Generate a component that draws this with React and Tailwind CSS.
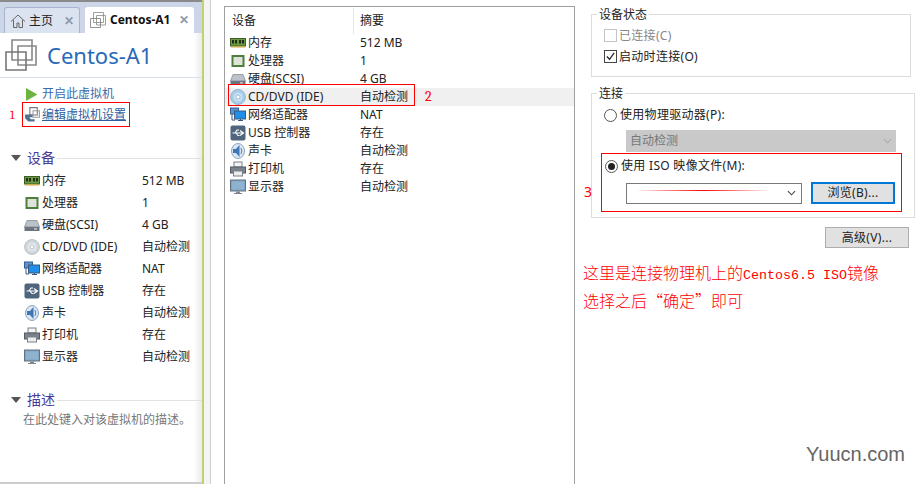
import React from 'react';

const Icon = ({ name, className = 'w-4 h-4' }) => {
    const icons = {
        memory: (
            <>
                <rect x="0.5" y="3.500" width="15" height="7.500" fill="#6f9a45" stroke="#3c5f24" />
                <path d="M2 5h2v3.500H2zM5 5h2v3.500H5zM9 5h2v3.500H9zM12 5h2v3.500h-2z" fill="#1f2f14" />
                <path d="M1 11h14v1.500H1z" fill="#c9a94a" />
            </>
        ),
        cpu: (
            <>
                <rect x="1.500" y="2" width="13" height="12" fill="#4f7f3d" />
                <rect x="3.500" y="4" width="9" height="8" fill="#dfe4da" />
            </>
        ),
        disk: (
            <>
                <path d="M3 3.500h10l2.500 6.500H.5z" fill="#bcc2c9" stroke="#7b828c" strokeWidth="0.7" />
                <rect x="0.5" y="10" width="15" height="4" fill="#6d747f" />
                <rect x="10" y="11.300" width="3" height="1.200" fill="#d8dce0" />
            </>
        ),
        cd: (
            <>
                <circle cx="8" cy="8" r="7.500" fill="#cfd6dc" stroke="#a4adb5" strokeWidth="0.6" />
                <circle cx="8" cy="8" r="4.500" fill="#e4e8ec" />
                <circle cx="8" cy="8" r="2" fill="#fff" stroke="#98a2ab" strokeWidth="0.6" />
            </>
        ),
        cdblue: (
            <>
                <circle cx="8" cy="8" r="7.500" fill="#a9cde8" stroke="#6f9cc2" strokeWidth="0.6" />
                <circle cx="8" cy="8" r="4.500" fill="#c9e0f2" />
                <circle cx="8" cy="8" r="2" fill="#fff" stroke="#6f9cc2" strokeWidth="0.6" />
            </>
        ),
        net: (
            <>
                <rect x="0.5" y="1" width="8" height="6" fill="#5f93c9" stroke="#2f5f94" />
                <rect x="4.500" y="4" width="11" height="8" fill="#1f8fe8" stroke="#3a5a7d" />
                <path d="M8 13.500h5M10.500 12v1.500M2 7v6h3" stroke="#3a5a7d" fill="none" />
            </>
        ),
        usb: (
            <>
                <rect x="0.5" y="0.5" width="15" height="15" rx="2" fill="#50667f" />
                <path d="M2.500 8h11M10 5.500 13.500 8 10 10.500M5 8l2-3h2M6 8l2 2.500h1.500" stroke="#fff" fill="none" strokeWidth="1.100" />
            </>
        ),
        sound: (
            <>
                <ellipse cx="8" cy="8" rx="6.500" ry="7.500" fill="#dbe6f2" stroke="#6f93b8" strokeWidth="0.8" />
                <path d="M3 6h3l3.500-4v12L6 10H3z" fill="#3f76b5" />
                <path d="M11 5q1.500 3 0 6" stroke="#5f86ad" fill="none" />
            </>
        ),
        printer: (
            <>
                <rect x="4" y="1" width="8" height="5" fill="#f4f4f4" stroke="#7b828c" />
                <rect x="0.5" y="6" width="15" height="6" fill="#7b828c" stroke="#555c65" />
                <rect x="3.500" y="10" width="9" height="5" fill="#eee" stroke="#7b828c" />
            </>
        ),
        monitor: (
            <>
                <rect x="0.5" y="1" width="15" height="11" fill="#7fa3c4" stroke="#65727f" />
                <rect x="2" y="2.500" width="12" height="8" fill="#8fb2d0" />
                <path d="M6 12.500h4v1.500H6zM4 14h8v1H4z" fill="#7f8791" />
            </>
        ),
        vm: (
            <>
                <path d="M3.500 0.500h10v10h-10z" fill="none" stroke="#888" strokeWidth="0.8" />
                <path d="M6.500 3.500h9v9.500h-9z" fill="none" stroke="#888" strokeWidth="0.8" />
                <path d="M0.500 6.500h10v9h-10z" fill="none" stroke="#777" strokeWidth="0.8" />
            </>
        ),
        home: (
            <path d="M1 8.500 8 2l7 6.500M3.500 7v7.500H7V10h2v4.500h3.500V7" fill="none" stroke="#666" />
        ),
        play: <path d="M0 0v16l14-8z" fill="#6cb33f" />,
        settings: (
            <>
                <path d="M5.500 1.500h7v7h-7z" fill="none" stroke="#777" />
                <path d="M8.500 4.500h6v6h-6z" fill="none" stroke="#999" />
                <path d="M1 8h7v2.500H5l1.500 2H10v2H4l-3-3z" fill="#54708f" />
            </>
        ),
    };
    return (
        <svg viewBox="0 0 16 16" className={`${className} shrink-0`}>
            {icons[name]}
        </svg>
    );
};

const devices = [
    { icon: 'memory', name: '内存', value: '512 MB' },
    { icon: 'cpu', name: '处理器', value: '1' },
    { icon: 'disk', name: '硬盘(SCSI)', value: '4 GB' },
    { icon: 'cd', name: 'CD/DVD (IDE)', value: '自动检测' },
    { icon: 'net', name: '网络适配器', value: 'NAT' },
    { icon: 'usb', name: 'USB 控制器', value: '存在' },
    { icon: 'sound', name: '声卡', value: '自动检测' },
    { icon: 'printer', name: '打印机', value: '存在' },
    { icon: 'monitor', name: '显示器', value: '自动检测' },
];

const SectionHead = ({ title }) => (
    <div className="flex items-center pl-[11px]">
        <span className="w-0 h-0 border-x-[5px] border-x-transparent border-t-[6px] border-t-[#555]" />
        <span className="ml-[6px] text-[14px] leading-[20px] text-[#4a3b98]">{title}</span>
        <span className="flex-1 h-px bg-[#dfe3e8] ml-[2px]" />
    </div>
);

const Sidebar = () => (
    <aside className="w-[202px] shrink-0 bg-linear-to-r from-white from-[96%] to-[#e9ebee] border-b-2 border-b-[#cccccc] flex flex-col text-[12px] text-[#222]">
        <div className="h-[33px] pt-[2px] bg-[#cdd5e8] border-t-2 border-t-[#8a8a8a] flex items-end pl-[4px] gap-[5px]">
            <div className="w-[76px] h-[26px] bg-[#dbe2f0] border border-b-0 border-[#a7b4cc] rounded-t-[3px] flex items-center pl-[5px]">
                <Icon name="home" />
                <span className="ml-[3px] text-[#222]">主页</span>
                <span className="ml-[11px] text-[#8d99ad] font-bold">✕</span>
            </div>
            <div className="w-[109px] h-[26px] bg-white rounded-t-[3px] flex items-center pl-[5px]">
                <Icon name="vm" />
                <span className="ml-[4px] text-[12px] font-bold text-[#111]">Centos-A1</span>
                <span className="ml-[9px] text-[#8d99ad] font-bold">✕</span>
            </div>
        </div>
        <div className="h-[45px] flex items-center pl-[5px] border-b border-[#d8dfe8]">
            <Icon name="vm" className="w-[32px] h-[32px]" />
            <span className="ml-[10px] text-[22px] text-[#2a69b8]">Centos-A1</span>
        </div>
        <div className="pl-[26px] mt-[7px] h-[18px] flex items-center text-[#3b6aa8]">
            <Icon name="play" className="w-[13px] h-[15px]" />
            <span className="ml-[3px]">开启此虚拟机</span>
        </div>
        <div className="flex items-center mt-[-1px] pl-[10px]">
            <span className="w-[12px] text-[#ff0000] font-serif">1</span>
            <div className="w-[108px] h-[25px] border border-solid border-[#ff0000] flex items-center pl-[1px] text-[#2f5f9f]">
                <Icon name="settings" className="w-[17px] h-[17px]" />
                <span className="ml-[1px] underline">编辑虚拟机设置</span>
            </div>
        </div>
        <div className="mt-[21px]">
            <SectionHead title="设备" />
        </div>
        <div className="mt-[2px]">
            {devices.map((d) => (
                <div key={d.icon} className="h-[22px] flex items-center pl-[24px]">
                    <Icon name={d.icon} />
                    <span className="ml-[2px] w-[100px] whitespace-nowrap">{d.name}</span>
                    <span className="whitespace-nowrap">{d.value}</span>
                </div>
            ))}
        </div>
        <div className="mt-[22px]">
            <SectionHead title="描述" />
        </div>
        <p className="pl-[23px] mt-[1px] text-[12px] text-[#777]">在此处键入对该虚拟机的描述。</p>
    </aside>
);

const DeviceList = () => (
    <div className="relative w-[351px] shrink-0 mt-[6px] border-t border-x border-[#a0a0a0] text-[12px] text-[#222]">
        <div className="h-[27px] pt-[1px] flex items-center">
            <span className="w-[128px] pl-[7px]">设备</span>
            <span className="h-full w-px bg-[#e5e5e5]" />
            <span className="pl-[6px]">摘要</span>
        </div>
        {devices.map((d) => (
            <div
                key={d.icon}
                className={`h-[18px] flex items-center pl-[5px] ${d.icon === 'cd' ? 'bg-[#f0f0f0]' : ''}`}
            >
                <Icon name={d.icon === 'cd' ? 'cdblue' : d.icon} />
                <span className="ml-[2px] w-[112px] whitespace-nowrap">{d.name}</span>
                <span className="whitespace-nowrap">{d.value}</span>
            </div>
        ))}
        {/* annotation over the CD/DVD row */}
        <div className="absolute left-[3px] top-[77px] w-[187px] h-[22px] border border-solid border-[#ff0000]" />
        <span className="absolute left-[200px] top-[79px] text-[#ff0000] text-[14px] font-serif">2</span>
    </div>
);

const Group = ({ title, className, children }) => (
    <fieldset className={`border border-[#dcdcdc] px-[12px] ${className}`}>
        <legend className="ml-[-7px] px-[2px] pt-[2px] text-[12px] leading-[14px]">{title}</legend>
        {children}
    </fieldset>
);

const Radio = ({ checked }) => (
    <span className="w-[13px] h-[13px] rounded-full border border-[#555] bg-white flex items-center justify-center shrink-0">
        {checked && <span className="w-[7px] h-[7px] rounded-full bg-[#222]" />}
    </span>
);

const Chevron = ({ color }) => (
    <svg viewBox="0 0 10 6" className="w-[9px] h-[6px]">
        <path d="M1 1l4 4 4-4" fill="none" stroke={color} strokeWidth="1.200" />
    </svg>
);

const Settings = () => (
    <div className="w-[320px] shrink-0 ml-[16px] mt-[6px] text-[12px] text-[#222]">
        <Group title="设备状态" className="h-[71px]">
            <div className="flex items-center h-[21px] mt-[3px] text-[#888] tracking-[0.3px]">
                <span className="w-[13px] h-[13px] border border-[#c4c4c4]" />
                <span className="ml-[2px]">已连接(C)</span>
            </div>
            <div className="flex items-center h-[21px] tracking-[0.3px]">
                <span className="w-[13px] h-[13px] border border-[#444] flex items-center justify-center">
                    <svg viewBox="0 0 12 12" className="w-[11px] h-[11px]">
                        <path d="M2 6l3 3 5-7" fill="none" stroke="#222" strokeWidth="1.400" />
                    </svg>
                </span>
                <span className="ml-[2px]">启动时连接(O)</span>
            </div>
        </Group>
        <Group title="连接" className="h-[133px] mt-[8px] relative">
            <div className="flex items-center h-[18px] mt-[5px] tracking-[0.3px]">
                <Radio />
                <span className="ml-[3px]">使用物理驱动器(P):</span>
            </div>
            <div className="ml-[22px] mt-[6px] w-[270px] h-[22px] bg-[#c9c9c9] flex items-center justify-between px-[4px] text-[#777]">
                <span>自动检测</span>
                <Chevron color="#aaa" />
            </div>
            <div className="relative ml-[-3px] w-[301px] h-[59px] mt-[1px] pl-[4px] pt-[1px]">
                <div className="flex items-center h-[18px] mt-[3px] tracking-[0.3px]">
                    <Radio checked />
                    <span className="ml-[3px] whitespace-nowrap">使用 ISO 映像文件(M):</span>
                </div>
                <div className="flex items-center mt-[7px] ml-[21px]">
                    <div className="relative w-[176px] h-[21px] border border-[#7a7a7a] flex items-center justify-end pr-[5px]">
                        <span className="absolute left-[8px] right-[30px] top-[6px] h-[1px] bg-linear-to-r from-transparent via-[#ff0000] to-transparent" />
                        <Chevron color="#444" />
                    </div>
                    <button className="ml-[9px] w-[84px] h-[22px] border-2 border-[#0078d7] bg-[#e1e1e1] text-[12px] tracking-[0.3px]">
                        浏览(B)...
                    </button>
                </div>
                {/* annotation box over the ISO option */}
                <div className="absolute inset-0 border border-solid border-[#ff0000] pointer-events-none" />
            </div>
            <span className="absolute left-[-8px] top-[80px] text-[#ff0000] text-[14px]">3</span>
        </Group>
        <div className="flex justify-end mt-[9px] pr-[2px]">
            <button className="w-[84px] h-[21px] border border-[#adadad] bg-[#e1e1e1] text-[12px] tracking-[0.3px]">高级(V)...</button>
        </div>
        <div className="ml-[-8px] mt-[10px] text-[16px] leading-[28px] text-[#ff0000] whitespace-nowrap font-light font-[family-name:'Noto_Sans_CJK_SC',sans-serif]">
            <p>
                这里是连接物理机上的
                <span className="text-[13.33px] leading-[0] font-[family-name:'Liberation_Mono',monospace]">
                    Centos6.5 ISO
                </span>
                镜像
            </p>
            <p>选择之后“确定”即可</p>
        </div>
        <div className="mt-[128px] text-right pr-[6px] text-[20px] leading-[24px] text-[#666] font-[family-name:'Liberation_Sans',sans-serif]">
            Yuucn.com
        </div>
    </div>
);

export default function App() {
    return (
        <div className="w-[918px] h-[484px] overflow-hidden flex bg-white font-[family-name:'Noto_Sans','Noto_Sans_CJK_SC',sans-serif]">
            <Sidebar />
            <div className="w-[9px] shrink-0 bg-[#f4f4f4] border-l-2 border-l-[#c3d16a] border-r border-r-[#d0d0d0]" />
            <div className="flex pl-[13px]">
                <DeviceList />
                <Settings />
            </div>
        </div>
    );
}
